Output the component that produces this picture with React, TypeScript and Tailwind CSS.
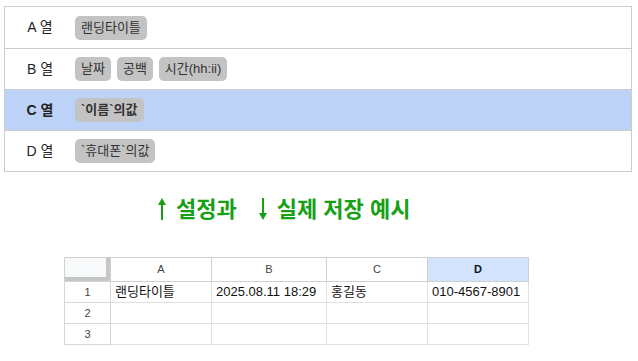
import React from "react";

const FONT = { fontFamily: '"Liberation Sans", "Noto Sans CJK KR", sans-serif' };

const rows = [
  { col: "A", chips: ["랜딩타이틀"] },
  { col: "B", chips: ["날짜", "공백", "시간(hh:ii)"] },
  { col: "C", chips: ["`이름`의값"], active: true },
  { col: "D", chips: ["`휴대폰`의값"] },
];

const cols = [
  { key: "A", w: "w-[101px]" },
  { key: "B", w: "w-[115px]" },
  { key: "C", w: "w-[101px]" },
  { key: "D", w: "w-[101px]", active: true },
];

const data = [
  ["랜딩타이틀", "2025.08.11 18:29", "홍길동", "010-4567-8901"],
  ["", "", "", ""],
  ["", "", "", ""],
];

function Arrow({ down }: { down?: boolean }) {
  return (
    <svg width="8" height="22" viewBox="0 0 8 22" className={down ? "rotate-180" : ""}>
      <path d="M4 0 L8 7 L5 7 L5 22 L3 22 L3 7 L0 7 Z" fill="currentColor" />
    </svg>
  );
}

export default function App() {
  return (
    <div className="w-[638px] h-[361px] bg-white overflow-hidden text-[#222]" style={FONT}>
      {/* column mapping settings */}
      <div className="ml-[4px] mt-[6px] w-[628px] border border-[#cccccc]">
        {rows.map((r, i) => (
          <div
            key={r.col}
            className={`flex items-center h-[41px] ${i > 0 ? "border-t border-[#cccccc]" : ""} ${r.active ? "bg-[#bdd2f7]" : ""}`}
          >
            <div className={`w-[70px] text-center text-[14px] ${r.active ? "font-bold" : ""}`}>{r.col} 열</div>
            <div className="flex gap-[6px]">
              {r.chips.map((c) => (
                <span
                  key={c}
                  className={`h-[24px] px-[6px] flex items-center rounded-[5px] bg-[#c3c3c3] text-[13px] text-[#333] ${r.active ? "font-bold" : ""}`}
                >
                  {c}
                </span>
              ))}
            </div>
          </div>
        ))}
      </div>

      <div className="mt-[19px] h-[36px] pl-[158px] flex items-center text-[22px] font-bold text-[#16a016]">
        <Arrow />
        <span className="ml-[10px]">설정과</span>
        <span className="ml-[22px]"><Arrow down /></span>
        <span className="ml-[10px]">실제 저장 예시</span>
      </div>

      {/* sheet example */}
      <table className="ml-[64px] mt-[30px] border-collapse table-fixed text-[13px]">
        <thead>
          <tr className="h-[24px]">
            <th className="w-[46px] p-0 bg-[#f8f9fa] border-t border-l border-[#d0d0d0]">
              <div className="h-[23px] border-r-[4px] border-b-[4px] border-[#c4c7c5]"></div>
            </th>
            {cols.map((c) => (
              <th
                key={c.key}
                className={`${c.w} p-0 border border-[#d0d0d0] text-[11px] text-center ${c.active ? "bg-[#d3e3fd] font-bold text-[#111]" : "font-normal text-[#444]"}`}
              >
                {c.key}
              </th>
            ))}
          </tr>
        </thead>
        <tbody>
          {data.map((row, ri) => (
            <tr key={ri} className="h-[21px]">
              <td className="p-0 border border-[#d6d6d6] text-center text-[11px] text-[#444]">{ri + 1}</td>
              {row.map((v, ci) => (
                <td key={ci} className="p-0 px-[4px] border border-[#e0e0e0] whitespace-nowrap text-[#111]">
                  {v}
                </td>
              ))}
            </tr>
          ))}
        </tbody>
      </table>
    </div>
  );
}
